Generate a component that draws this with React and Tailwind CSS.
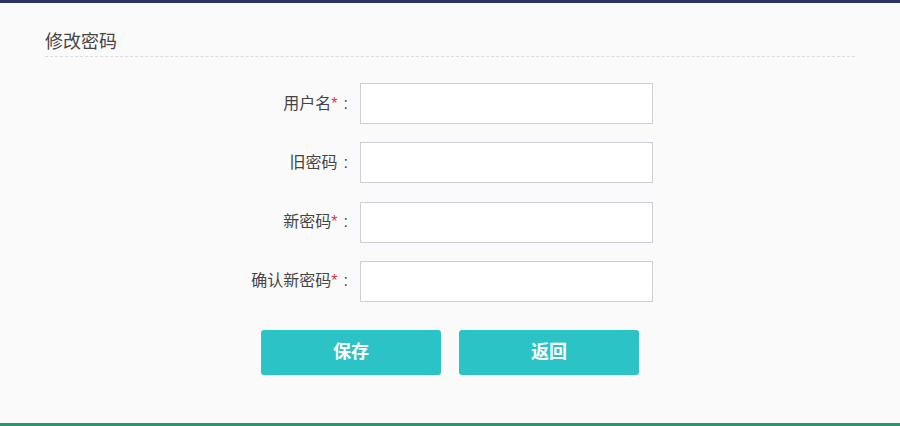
const fields = [
  { label: '用户名', required: true },
  { label: '旧密码', required: false },
  { label: '新密码', required: true },
  { label: '确认新密码', required: true },
];

export default function App() {
  return (
    <div className="flex h-[426px] w-[900px] flex-col bg-[#fafafa] font-['Liberation_Sans','Noto_Sans_CJK_SC',sans-serif] text-[#333]">
      <div className="h-[3px] bg-[#2b3264]" />
      <div className="flex-1 px-[45px] pt-[27px]">
        <div className="h-[27px] border-b border-dashed border-[#dcdcdc] text-[18px] leading-[24px] text-[#444]">
          修改密码
        </div>

        <div className="mt-[26px] flex flex-col gap-[18.33px]">
          {fields.map((f) => (
            <div key={f.label} className="flex items-center">
              <label className="w-[307px] pr-[4px] text-right text-[16px] leading-[22px] text-[#444]">
                {f.label}
                {f.required && <span className="text-[#e0334a]">*</span>}
                <span className="ml-[6px]">:</span>
              </label>
              <input
                type="text"
                className="ml-[8px] h-[41px] w-[293px] border border-[#ccd0d6] bg-white px-2 text-[14px] outline-none"
              />
            </div>
          ))}
        </div>

        <div className="mt-[28px] flex gap-[18px] pl-[216px]">
          <button className="h-[45px] w-[180px] rounded-[3px] bg-[#2bc3c6] text-[18px] font-bold text-white">
            保存
          </button>
          <button className="h-[45px] w-[180px] rounded-[3px] bg-[#2bc3c6] text-[18px] font-bold text-white">
            返回
          </button>
        </div>
      </div>
      <div className="h-[3px] bg-[#239a6e]" />
    </div>
  );
}
